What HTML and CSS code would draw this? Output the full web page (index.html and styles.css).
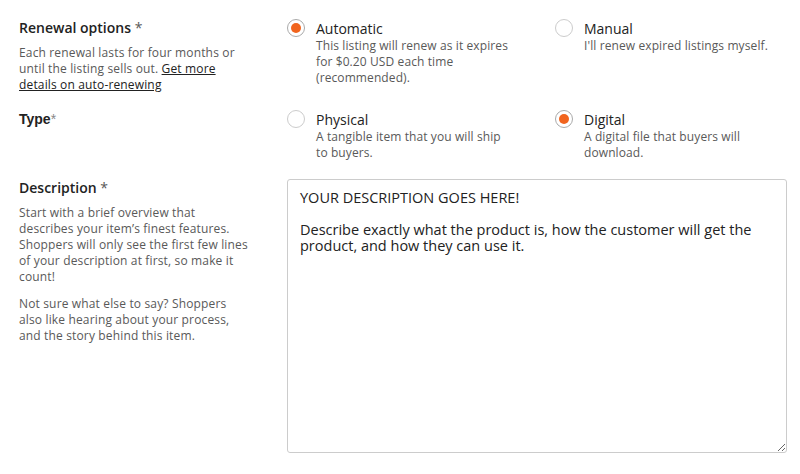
FILE: index.html
```html
<!DOCTYPE html>
<html lang="en">
<head>
    <meta charset="UTF-8">
    <meta name="viewport" content="width=device-width, initial-scale=1.0">
    <title>Listing details</title>
    <link rel="stylesheet" href="styles.css">
</head>
<body>

    <div class="form-row">
        <div class="field-info">
            <h3>Renewal options <span class="req">*</span></h3>
            <p>Each renewal lasts for four months or until the listing sells out. <a href="#">Get more details on auto-renewing</a></p>
        </div>
        <div class="options">
            <label class="option">
                <input type="radio" name="renewal" checked>
                <span class="dot"></span>
                <span class="option-text">
                    <span class="option-title">Automatic</span>
                    <span class="option-desc">This listing will renew as it expires for $0.20 USD each time (recommended).</span>
                </span>
            </label>
            <label class="option">
                <input type="radio" name="renewal">
                <span class="dot"></span>
                <span class="option-text">
                    <span class="option-title">Manual</span>
                    <span class="option-desc">I'll renew expired listings myself.</span>
                </span>
            </label>
        </div>
    </div>

    <div class="form-row type-row">
        <div class="field-info">
            <h3 class="type-title">Type<span class="req">*</span></h3>
        </div>
        <div class="options">
            <label class="option">
                <input type="radio" name="type">
                <span class="dot"></span>
                <span class="option-text">
                    <span class="option-title">Physical</span>
                    <span class="option-desc">A tangible item that you will ship to buyers.</span>
                </span>
            </label>
            <label class="option">
                <input type="radio" name="type" checked>
                <span class="dot"></span>
                <span class="option-text">
                    <span class="option-title">Digital</span>
                    <span class="option-desc">A digital file that buyers will download.</span>
                </span>
            </label>
        </div>
    </div>

    <div class="form-row desc-row">
        <div class="field-info">
            <h3>Description <span class="req">*</span></h3>
            <p>Start with a brief overview that describes your item’s finest features. Shoppers will only see the first few lines of your description at first, so make it count!</p>
            <p>Not sure what else to say? Shoppers also like hearing about your process, and the story behind this item.</p>
        </div>
        <textarea class="desc-box">YOUR DESCRIPTION GOES HERE!

Describe exactly what the product is, how the customer will get the product, and how they can use it.</textarea>
    </div>

</body>
</html>
```

FILE: styles.css
```css
* {
    margin: 0;
    padding: 0;
    box-sizing: border-box;
}

body {
    font-family: "Open Sans", Arial, sans-serif;
    background-color: #fff;
    color: #222;
    padding: 19px 13px 0 19px;
}

.form-row {
    display: grid;
    grid-template-columns: 268px 1fr;
}

.field-info h3 {
    font-size: 14px;
    font-weight: 600;
    line-height: 18px;
    color: #222;
}

.field-info .req {
    color: #595959;
    font-weight: 400;
}

.field-info p {
    font-size: 12px;
    line-height: 16px;
    letter-spacing: 0.15px;
    color: #595959;
    width: 231px;
    margin-top: 8px;
}

.field-info p + p {
    margin-top: 11px;
}

.field-info a {
    color: #222;
    text-decoration: underline;
}

.type-title {
    font-family: "Liberation Sans", Arial, sans-serif;
    font-weight: 700 !important;
}

.type-title .req {
    color: #888;
}

.options {
    display: grid;
    grid-template-columns: 268px 1fr;
}

.option {
    display: flex;
    gap: 11px;
    cursor: pointer;
}

.option input {
    display: none;
}

.dot {
    flex: none;
    width: 18px;
    height: 18px;
    border-radius: 50%;
    border: 1px solid #ccc;
    background: #fff;
    position: relative;
}

.option input:checked + .dot {
    border-color: #aaa;
}

.option input:checked + .dot::after {
    content: "";
    position: absolute;
    left: 3px;
    top: 3px;
    width: 10px;
    height: 10px;
    border-radius: 50%;
    background: #f1641e;
}

.option-text {
    display: flex;
    flex-direction: column;
}

.option-title {
    font-size: 14px;
    line-height: 19px;
    color: #222;
}

.option-desc {
    font-size: 12px;
    line-height: 16px;
    letter-spacing: 0.1px;
    color: #595959;
    width: 195px;
}

.type-row {
    margin-top: 17px;
}

.desc-row {
    margin-top: 18px;
}

.desc-box {
    width: 100%;
    height: 274px;
    border: 1px solid #ccc;
    border-radius: 3px;
    padding: 10px 12px;
    font-family: "Open Sans", Arial, sans-serif;
    font-size: 14.5px;
    line-height: 16px;
    color: #222;
    resize: vertical;
}
```
